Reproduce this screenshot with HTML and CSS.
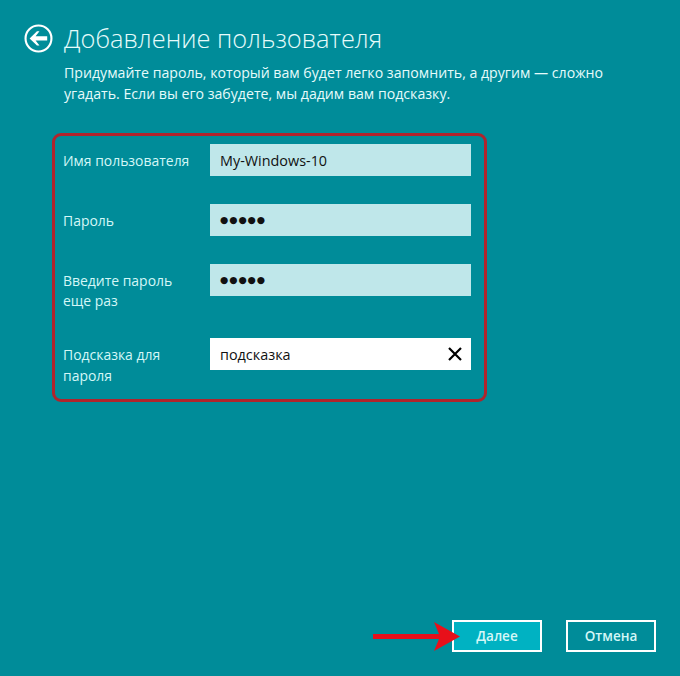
FILE: index.html
```html
<!DOCTYPE html>
<html lang="ru">
<head>
<meta charset="utf-8">
<title>Добавление пользователя</title>
<link rel="stylesheet" href="styles.css">
</head>
<body>
<main class="page">
  <header class="header">
    <svg class="back" width="30" height="30" viewBox="0 0 30 30" aria-hidden="true">
      <circle cx="15" cy="15" r="13.4" fill="none" stroke="#fff" stroke-width="2.2"/>
      <path d="M5.8 15 L13.4 7.6 L16 7.6 L12 12.6 H24 V17 H12 L16 22.2 L13.4 22.2 Z" fill="#fff"/>
    </svg>
    <h1 class="title">Добавление пользователя</h1>
  </header>
  <p class="intro">Придумайте пароль, который вам будет легко запомнить, а другим — сложно угадать. Если вы его забудете, мы дадим вам подсказку.</p>
  <form class="form">
    <div class="row row-first">
      <label class="label">Имя пользователя</label>
      <div class="field">My-Windows-10</div>
    </div>
    <div class="row">
      <label class="label">Пароль</label>
      <div class="field dots">●●●●●</div>
    </div>
    <div class="row">
      <label class="label">Введите пароль<br>еще раз</label>
      <div class="field dots">●●●●●</div>
    </div>
    <div class="row row-hint">
      <label class="label">Подсказка для<br>пароля</label>
      <div class="field field-active">подсказка
        <svg class="clear" width="14" height="14" viewBox="0 0 14 14" aria-hidden="true">
          <path d="M1 1 L13 13 M13 1 L1 13" stroke="#000" stroke-width="2.2" fill="none"/>
        </svg>
      </div>
    </div>
  </form>
  <footer class="footer">
    <button class="btn btn-primary" type="button">Далее</button>
    <button class="btn" type="button">Отмена</button>
    <svg class="pointer" width="87" height="36" viewBox="0 0 87 36" aria-hidden="true">
      <path d="M0 16 H66 L61 4 L87 18.5 L61 33 L66 21 H0 Z" fill="#e8101a"/>
    </svg>
  </footer>
</main>
</body>
</html>
```

FILE: styles.css
```css
html, body {
  margin: 0;
  height: 100%;
}
body {
  background: #008c99;
  color: #fff;
  font-family: "Open Sans", "Noto Sans", sans-serif;
}
.page {
  position: relative;
  box-sizing: border-box;
  width: 680px;
  height: 676px;
  padding: 24px;
  overflow: hidden;
}
.header {
  display: flex;
  align-items: center;
  gap: 11px;
  height: 28px;
}
.back {
  flex: none;
  width: 29px;
  height: 29px;
}
.title {
  margin: 0 0 1px;
  font-size: 25.4px;
  font-weight: 300;
  line-height: 28px;
  color: #e6fbfb;
}
.intro {
  margin: 10px 0 0 40px;
  width: 560px;
  font-size: 14.15px;
  line-height: 21px;
  color: #e6fbfb;
}
.form {
  box-sizing: border-box;
  width: 435px;
  height: 269px;
  margin: 29px 0 0 28px;
  padding: 8px 13px 0 8px;
  border: 3px solid #b0242c;
  border-radius: 9px;
}
.row {
  display: flex;
  justify-content: space-between;
  align-items: flex-start;
  height: 32px;
  margin-top: 28px;
}
.row-first {
  margin-top: 0;
}
.row-hint {
  margin-top: 42px;
}
.label {
  font-size: 13.95px;
  line-height: 20px;
  padding-top: 7px;
  color: #d4f7f7;
}
.row-hint .label {
  line-height: 21px;
  padding-top: 6px;
}
.field {
  position: relative;
  box-sizing: border-box;
  width: 261px;
  height: 32px;
  padding-left: 10px;
  background: #bfe7ea;
  color: #111;
  font-size: 14.4px;
  line-height: 33px;
}
.dots {
  font-family: "DejaVu Sans", sans-serif;
  font-size: 9.5px;
  letter-spacing: 0.9px;
  line-height: 32px;
}
.field-active {
  background: #fff;
}
.clear {
  position: absolute;
  right: 9px;
  top: 9px;
}
.footer {
  position: absolute;
  left: 0;
  right: 24px;
  bottom: 24px;
  display: flex;
  justify-content: flex-end;
  gap: 24px;
}
.btn {
  box-sizing: border-box;
  width: 90px;
  height: 32px;
  padding: 0;
  border: 2px solid #fff;
  background: transparent;
  color: #d4f7f7;
  font-family: inherit;
  font-size: 13.5px;
  font-weight: 600;
}
.btn-primary {
  background: #00b2c2;
}
.pointer {
  position: absolute;
  left: 373px;
  top: -2px;
}
```
